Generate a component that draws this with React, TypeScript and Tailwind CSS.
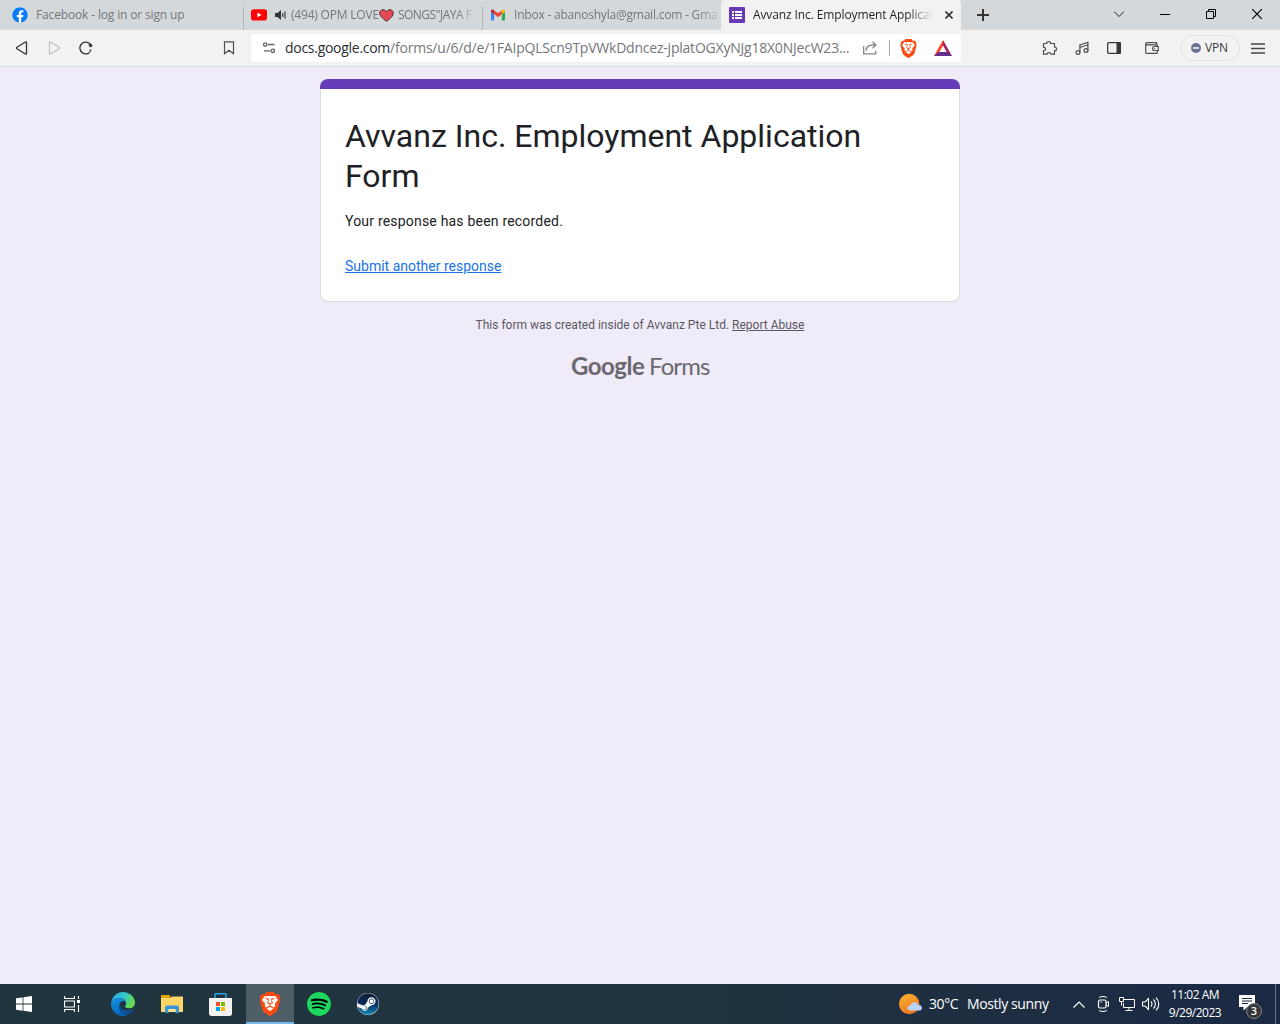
import React from "react";
import { SiBrave, SiSpotify } from "react-icons/si";
import { FaSteam, FaFacebook } from "react-icons/fa";

const ui = "font-['Open_Sans','Noto_Sans',sans-serif]";

function BraveLogo({ size }: { size: string }) {
  return (
    <span className={`grid ${size}`}>
      <svg viewBox="0 0 24 24" className="col-start-1 row-start-1 h-full w-full">
        <path d="M6 4h12l2 4-2 9-6 5-6-5-2-9z" fill="#fff" />
      </svg>
      <SiBrave className="col-start-1 row-start-1 h-full w-full text-[#fb4b10]" />
    </span>
  );
}

function YouTube() {
  return (
    <svg className="h-4 w-4 shrink-0" viewBox="0 0 16 16">
      <rect y="2.2" width="16" height="11.4" rx="2.8" fill="#f00" />
      <path d="M6.4 5.5v4.8L10.6 7.9z" fill="#fff" />
    </svg>
  );
}

function Gmail() {
  return (
    <svg className="h-4 w-4 shrink-0" viewBox="0 0 16 16">
      <path d="M1 4.2v8.3c0 .6.4 1 1 1h2.2V6.6z" fill="#4285f4" />
      <path d="M15 4.2v8.3c0 .6-.4 1-1 1h-2.2V6.6z" fill="#34a853" />
      <path d="M11.8 4.1V7.2L15 4.8V3.9c0-1.4-1.4-1.9-2.2-1.2z" fill="#fbbc04" />
      <path d="M4.2 7.3V3.4L8 6.3l3.8-2.9v3.9L8 10.2z" fill="#ea4335" />
      <path d="M1 3.9v.9l3.2 2.5V3.4l-1-.7C2.400 2.100 1 2.500 1 3.900z" fill="#c5221f" />
    </svg>
  );
}

function FormsIcon() {
  return (
    <svg className="h-4 w-4 shrink-0" viewBox="0 0 16 16">
      <rect width="16" height="16" rx="1" fill="#673ab7" />
      <path d="M3 4h2v2H3zM6 4h7v2H6zM3 7h2v2H3zM6 7h7v2H6zM3 10h2v2H3zM6 10h7v2H6z" fill="#fff" />
    </svg>
  );
}

function TabStrip() {
  return (
    <div className={`flex h-[30px] bg-[#d4d8db] text-[12px] leading-[30px] text-[#73777a] ${ui}`}>
      <div className="flex w-[244px] items-center pl-3">
        <span className="flex h-4 w-4 shrink-0 items-center justify-center rounded-full bg-white">
          <FaFacebook className="h-4 w-4 text-[#0a7cf5]" />
        </span>
        <span className="ml-2 flex-1 whitespace-nowrap tracking-[-0.15px]">Facebook - log in or sign up</span>
        <span className="mt-[7px] h-[23px] w-px bg-[#b3b7ba]" />
      </div>
      <div className="flex w-[239px] items-center pl-[7px]">
        <YouTube />
        <svg className="ml-2 h-3 w-3 shrink-0" viewBox="0 0 12 12">
          <path d="M0 4h2.500L6 1v10L2.500 8H0z" fill="#333" />
          <path d="M7.800 4v4M10 2.500v7" stroke="#333" strokeWidth="1.100" fill="none" />
        </svg>
        <span className="ml-1 flex flex-1 items-center whitespace-nowrap [mask-image:linear-gradient(to_right,#000_165px,transparent_186px)]">
          <span className="tracking-[-0.2px]">(494) OPM LOVE</span>
          <svg className="h-[13px] w-[15px] shrink-0" viewBox="0 0 15 13">
            <path d="M7.500 12.300C3 9 .7 6.700.7 4.100.7 2 2.200.700 4 .700c1.500 0 2.700.800 3.500 2C8.300 1.500 9.500.700 11 .700c1.800 0 3.300 1.300 3.300 3.400 0 2.600-2.300 4.900-6.800 8.200z" fill="#e74856" stroke="#4b3034" strokeWidth="1" />
          </svg>
          <span className="ml-1 tracking-[-0.5px]">SONGS"JAYA F</span>
        </span>
        <span className="ml-1 mt-[7px] h-[23px] w-px bg-[#b3b7ba]" />
      </div>
      <div className="flex w-[238px] items-center pl-[7px]">
        <Gmail />
        <span className="ml-2 w-[206px] whitespace-nowrap tracking-[-0.21px] [mask-image:linear-gradient(to_right,#000_182px,transparent_212px)]">Inbox - abanoshyla@gmail.com - Gma</span>
      </div>
      <div className="flex w-60 items-center rounded-t-[4px] bg-[#f2f2f2] pl-2 text-[#1f2225]">
        <FormsIcon />
        <span className="ml-2 w-[181px] whitespace-nowrap tracking-[-0.11px] [mask-image:linear-gradient(to_right,#000_155px,transparent_180px)]">Avvanz Inc. Employment Applicat</span>
        <svg className="ml-[11px] h-2 w-2" viewBox="0 0 8 8">
          <path d="M.5.500l7 7M7.500.500l-7 7" stroke="#333" strokeWidth="1.600" />
        </svg>
      </div>
      <svg className="ml-4 mt-[9px] h-3 w-3" viewBox="0 0 12 12">
        <path d="M6 0v12M0 6h12" stroke="#333" strokeWidth="2" />
      </svg>
      <div className="ml-auto flex items-center pb-[2px]">
        <svg className="mr-9 h-[6px] w-[10px]" viewBox="0 0 10 6">
          <path d="M0 .5l5 5 5-5" stroke="#222" fill="none" />
        </svg>
        <svg className="mr-9 h-[10px] w-[10px]" viewBox="0 0 10 10">
          <path d="M0 5.500h10" stroke="#000" />
        </svg>
        <svg className="mr-9 h-[10px] w-[10px]" viewBox="0 0 10 10">
          <path d="M.5 2.500h7v7h-7zM2.500 2.500v-2h7v7h-2" stroke="#000" fill="none" />
        </svg>
        <svg className="mr-[18px] h-[10px] w-[10px]" viewBox="0 0 10 10">
          <path d="M0 0l10 10M10 0L0 10" stroke="#000" strokeWidth="1.200" />
        </svg>
      </div>
    </div>
  );
}

function Toolbar() {
  const line = { fill: "none", stroke: "#4b4e52", strokeWidth: 1.2 } as const;
  return (
    <div className={`flex h-[37px] items-center border-b border-[#d7dadd] bg-[#f2f2f2] ${ui}`}>
      <svg className="ml-4 h-4 w-3" viewBox="0 0 12 16">
        <path d="M10.500 2.500v11c0 .7-.6.900-1.100.500L1 8.800c-.6-.5-.6-1 0-1.500L9.400 2c.5-.4 1.100-.2 1.100.5z" fill="none" stroke="#333" strokeWidth="1.300" />
      </svg>
      <svg className="ml-5 h-4 w-3" viewBox="0 0 12 16">
        <path d="M1.500 2.500v11c0 .7.6.900 1.100.500L11 8.800c.6-.5.6-1 0-1.500L2.600 2c-.5-.4-1.100-.2-1.100.5z" fill="none" stroke="#bfc1c4" strokeWidth="1.300" />
      </svg>
      <svg className="ml-[18px] h-4 w-4" viewBox="0 0 16 16">
        <path d="M11.600 12.500A5.900 5.900 0 1 1 13 5.300" fill="none" stroke="#333" strokeWidth="1.400" />
        <path d="M10.300 5.500l2-2.300 2.400 2.300-1.800 2z" fill="#333" />
        <path d="M12.800 9.500c-.2.800-.5 1.500-1 2.300" stroke="#333" strokeWidth="1.300" />
      </svg>
      <svg className="ml-[129px] h-[14px] w-3" viewBox="0 0 12 14">
        <path d="M1.500.800h9v12L6 9.300 1.500 12.800z" {...line} strokeLinejoin="round" />
      </svg>
      <div className="ml-4 flex h-7 w-[710px] items-center rounded bg-white pl-3">
        <svg className="h-3 w-3" viewBox="0 0 12 12">
          <g fill="none" stroke="#5f6368" strokeWidth="1.300">
            <circle cx="2.200" cy="2.500" r="1.700" />
            <circle cx="9.800" cy="8.800" r="1.700" />
            <path d="M5 2.500h6.500M1 8.800h6" />
          </g>
        </svg>
        <span className="ml-[10px] w-[567px] whitespace-nowrap text-[14px] leading-7 tracking-[-0.22px] text-[#74777b]">
          <span className="tracking-[-0.28px] text-[#2b2e31]">docs.google.com</span>/forms/u/6/d/e/1FAIpQLScn9TpVWkDdncez-jplatOGXyNJg18X0NJecW23...
        </span>
        <svg className="ml-[11px] h-[14px] w-[14px]" viewBox="0 0 14 14">
          <path d="M.7 5v7.800h12V9.800M3 9.800c.3-4.300 3-5.800 7-5.800h2.500M9.500.8l3.500 3.200-3.500 3.200" fill="none" stroke="#85888b" strokeWidth="1.300" />
        </svg>
        <span className="ml-3 h-4 w-px bg-[#a5a8ab]" />
        <span className="ml-[9px]"><BraveLogo size="h-[19px] w-[19px]" /></span>
        <svg className="ml-4 h-4 w-[18px]" viewBox="0 0 18 16">
          <path d="M9 0L0 16l4.500-2.500L9 5.500z" fill="#ff4724" />
          <path d="M9 0l9 16-4.500-2.500L9 5.500z" fill="#9e1f63" />
          <path d="M0 16l4.500-4h9l4.500 4z" fill="#662d91" />
        </svg>
      </div>
      <svg className="ml-[81px] h-4 w-4" viewBox="0 0 16 16">
        <path d="M1.500 3.500h3.300C4.300.8 9 .8 8.500 3.500h4v3.600c2.800-.4 2.800 4 0 3.600v3.500H8.800c.2-2.200-3.800-2.200-3.600 0H1.500v-3.500c2.700.2 2.700-3.800 0-3.600z" {...line} strokeLinejoin="round" />
      </svg>
      <svg className="ml-[17px] h-4 w-4" viewBox="0 0 16 16">
        <circle cx="3" cy="12.500" r="1.900" {...line} />
        <circle cx="11" cy="10.500" r="1.900" {...line} />
        <path d="M4.900 12.500V5l8-2.700v8.200M4.900 7.500l8-2.700" {...line} />
      </svg>
      <svg className="ml-4 h-3 w-[14px]" viewBox="0 0 14 12">
        <rect x=".7" y=".7" width="12.600" height="10.600" rx="1" fill="none" stroke="#35383b" strokeWidth="1.300" />
        <path d="M9.500 0H13a1 1 0 0 1 1 1v10a1 1 0 0 1-1 1H9.500z" fill="#35383b" />
      </svg>
      <svg className="ml-6 h-3 w-[14px]" viewBox="0 0 14 12">
        <path d="M12.300 4V2.800H2C.3 2.800.3.700 2 .700h9.500v2M.7 1.700v8.500c0 .7.4 1.100 1.100 1.100h9.500c.6 0 1-.4 1-1V8.500M13.300 4.500H9.500c-2.500 0-2.500 4 0 4h3.800zM9.300 6.500h1" {...line} />
      </svg>
      <div className="ml-[21px] flex h-[26px] w-[60px] items-center rounded-full border border-[#dfe1e3] pl-[10px] text-[12px] text-[#3b3d40]">
        <span className="flex h-[10px] w-[10px] items-center justify-center rounded-full bg-[#6b7094]">
          <span className="h-[1.5px] w-[6px] bg-[#d7d9e5]" />
        </span>
        <span className="ml-1 tracking-[-0.2px]">VPN</span>
      </div>
      <svg className="ml-[11px] h-[11px] w-[14px]" viewBox="0 0 14 11">
        <path d="M0 1h14M0 5.500h14M0 10h14" stroke="#44474a" strokeWidth="1.300" />
      </svg>
    </div>
  );
}

function FormPage() {
  return (
    <main className="flex flex-1 flex-col items-center bg-[#efebf8] pt-3 font-['Roboto',sans-serif]">
      <section className="flex h-[223px] w-[640px] flex-col">
        <div className="h-[10px] shrink-0 rounded-t-lg bg-[#673ab7]" />
        <div className="flex-1 rounded-b-lg border border-t-0 border-[#dadce0] bg-white px-6">
          <h1 className="mt-[27px] text-[32px] leading-10 text-[#202124]">Avvanz Inc. Employment Application Form</h1>
          <p className="mt-[15px] text-[14px] leading-5 tracking-[0.2px] text-[#202124]">Your response has been recorded.</p>
          <a className="mt-[25px] block text-[14px] leading-5 text-[#1a73e8] underline">Submit another response</a>
        </div>
      </section>
      <p className="mt-[15px] text-[12px] leading-4 text-[#5b5861]">
        This form was created inside of Avvanz Pte Ltd. <a className="underline">Report Abuse</a>
      </p>
      <div className="mt-[19px] flex items-baseline gap-1 font-['Lato',sans-serif] text-[24px] leading-7 text-[#6b6870]">
        <span className="w-[74px] font-bold tracking-[-0.5px]">Google</span>
        <span className="w-[60px] tracking-[-0.9px]">Forms</span>
      </div>
    </main>
  );
}

function Taskbar() {
  return (
    <footer className={`flex h-10 items-center bg-gradient-to-r from-[#20353e] via-[#20343f] to-[#1b2944] text-white ${ui}`}>
      <div className="flex w-12 justify-center">
        <svg className="h-4 w-4" viewBox="0 0 16 16">
          <path d="M0 2.300L6.600 1.400v6.200H0zM7.400 1.200L16 0v7.600H7.400zM0 8.400h6.600v6.300L0 13.800zM7.400 8.400H16V16l-8.600-1.200z" fill="#fff" />
        </svg>
      </div>
      <div className="mr-[2px] flex w-12 justify-center">
        <svg className="h-4 w-4" viewBox="0 0 16 16">
          <path d="M.6 0v2.500h9.800V0M.6 16v-2.500h9.800V16M.6 5h9.800v6H.6zM14.500 0v3M14.500 9v7" fill="none" stroke="#fff" strokeWidth="1.100" />
          <rect x="13" y="4" width="3" height="3" fill="#fff" />
        </svg>
      </div>
      <div className="flex w-[49px] justify-center">
        <svg className="h-6 w-6" viewBox="0 0 24 24">
          <defs>
            <linearGradient id="edgeTop" x1="0" y1="0" x2="1" y2=".4">
              <stop offset="0" stopColor="#2aa7e5" />
              <stop offset=".55" stopColor="#2fc5c9" />
              <stop offset="1" stopColor="#68dd50" />
            </linearGradient>
            <linearGradient id="edgeLow" x1="0" y1="0" x2=".4" y2="1">
              <stop offset="0" stopColor="#1698e4" />
              <stop offset="1" stopColor="#0862b8" />
            </linearGradient>
          </defs>
          <path d="M.5 10C1.500 3.800 6.300 0 12 0c7 0 12 5.300 12 10.500 0 3.500-2.700 5.800-6 5.800-2.500 0-4-.8-4-1.700 0-.8 1.100-1.200 1.100-3C15.100 8.300 12 6 8.500 6 4.500 6 1.700 8 .5 10z" fill="url(#edgeTop)" />
          <path d="M0 12C0 8 4 6 8.500 6c3 0 5.500 1.600 6.300 3.800C13.800 9 12.800 8.800 12 9c-3.500.8-4.800 4.300-3.300 8 1.500 3.800 4.800 5.600 8.500 5.800C15.800 23.500 14 24 12 24 5.300 24 0 18.600 0 12z" fill="url(#edgeLow)" />
          <path d="M8.700 10.800C6.600 15 9 22 16 23c2.600-.9 5-2.900 6.300-5.300.3-.5-.2-.8-.7-.5-6.300 2.900-13.500-.2-12.900-6.400z" fill="#124e93" />
        </svg>
      </div>
      <div className="flex w-[49px] justify-center">
        <svg className="h-[18px] w-[22px]" viewBox="0 0 22 18">
          <path d="M0 0h9v3H0z" fill="#e9a100" />
          <path d="M0 3h9l1.500-1.500H22V17H0z" fill="#ffd566" />
          <path d="M4 18v-5.500C4 11 4.800 10.500 6 10.500h10c1.200 0 2 .5 2 2V18h-3.500v-4h-7v4z" fill="#3a95d8" />
          <path d="M7.500 14h7v3h-7z" fill="#ffe599" />
        </svg>
      </div>
      <div className="mr-px flex w-[49px] justify-center">
        <svg className="h-[23px] w-[23px]" viewBox="0 0 23 23">
          <path d="M6 6V1.500c0-.5.3-.8.800-.8h9.400c.5 0 .8.300.8.800V6" fill="none" stroke="#29a4e5" strokeWidth="1.500" />
          <path d="M0 5h23v15.500c0 1.600-.9 2.500-2.500 2.500h-18C.9 23 0 22.100 0 20.500z" fill="#f2f2f3" />
          <path d="M7 9h4v4H7z" fill="#f25022" /><path d="M12 9h4v4h-4z" fill="#7fba00" />
          <path d="M7 14h4v4H7z" fill="#00a4ef" /><path d="M12 14h4v4h-4z" fill="#ffb900" />
        </svg>
      </div>
      <div className="flex h-10 w-12 items-center justify-center border-b-2 border-[#76b9ed] bg-[#4d5e67] pt-[2px]">
        <BraveLogo size="h-6 w-6" />
      </div>
      <div className="flex w-[49px] justify-center">
        <span className="rounded-full bg-black"><SiSpotify className="h-6 w-6 text-[#1ed760]" /></span>
      </div>
      <div className="flex w-[49px] justify-center">
        <span className="rounded-full bg-white">
          <svg className="h-0 w-0">
            <defs>
              <linearGradient id="steam" x1="0" y1="0" x2="0" y2="1">
                <stop offset="0" stopColor="#111d38" />
                <stop offset=".5" stopColor="#0b2b5b" />
                <stop offset="1" stopColor="#1387b8" />
              </linearGradient>
            </defs>
          </svg>
          <FaSteam className="h-[22px] w-[22px]" fill="url(#steam)" />
        </span>
      </div>
      <div className="ml-auto flex h-10 items-center">
        <svg className="mt-[2px] h-6 w-6" viewBox="0 0 24 24">
          <defs>
            <linearGradient id="sun" x1="0" y1="0" x2=".5" y2="1">
              <stop offset="0" stopColor="#f8b62d" />
              <stop offset="1" stopColor="#f07620" />
            </linearGradient>
          </defs>
          <circle cx="10.200" cy="11" r="10.200" fill="url(#sun)" />
          <path d="M11.500 17.500c-4.500 0-4-5 0-5 .8-4 6.500-4.500 7.800-.5 4.500-.5 5 5.500.8 5.500z" fill="#b8d3f7" />
        </svg>
        <span className="mb-px ml-[6px] w-[38px] whitespace-nowrap text-[14px] tracking-[-0.4px]">30°C</span>
        <span className="mb-px w-[106px] whitespace-nowrap text-[14px] tracking-[-0.4px]">Mostly sunny</span>
        <svg className="h-[7px] w-3" viewBox="0 0 12 7"><path d="M.5 6.500L6 1l5.500 5.500" fill="none" stroke="#fff" strokeWidth="1.200" /></svg>
        <svg className="ml-3 h-4 w-3" viewBox="0 0 12 16">
          <path d="M2 1.500C4 .2 8 .2 10 1.500M2 14.500c2 1.300 6 1.300 8 0" fill="none" stroke="#fff" />
          <rect x="1.500" y="4" width="7.500" height="8" rx="1.500" fill="none" stroke="#fff" strokeWidth="1.200" />
          <path d="M9 7l2.500-1.500v5L9 9" fill="none" stroke="#fff" />
          <path d="M3.500 6H5" stroke="#fff" />
        </svg>
        <svg className="ml-[10px] h-[14px] w-4" viewBox="0 0 16 14">
          <path d="M5 2.500h10.500v8H4.500V6M10 10.500v3M6.500 13.500h7M.5.500h4v4h-4zM2.500 4.500v4" fill="none" stroke="#fff" />
        </svg>
        <svg className="ml-[7px] h-[14px] w-[18px]" viewBox="0 0 18 14">
          <path d="M.5 5h2.500l3.500-3.500v11L3 9H.5zM9 4.500c1.300 1.300 1.300 3.700 0 5M11.500 2.500c2.500 2.500 2.500 6.500 0 9M14 .700c3.700 3.600 3.700 9 0 12.600" fill="none" stroke="#fff" strokeWidth="1.100" />
        </svg>
        <div className="ml-1 w-[62px] whitespace-nowrap text-center text-[12px] leading-[18px] tracking-[-0.5px]">
          <div>11:02 AM</div>
          <div>9/29/2023</div>
        </div>
        <div className="relative ml-[13px] h-6 w-6">
          <svg className="mt-[3px] h-4 w-4" viewBox="0 0 16 16">
            <path d="M0 0h16v12H8l-3.500 3.500V12H0z" fill="#fff" />
            <path d="M3 3.500h10M3 6h10M3 8.500h6" stroke="#1b2b42" />
          </svg>
          <span className="absolute left-[7px] top-[11px] flex h-4 w-4 items-center justify-center rounded-full border border-[#85888b] bg-[#333537] text-[11px] font-semibold">3</span>
        </div>
        <span className="ml-3 mr-1 h-10 w-px bg-[#657080]" />
      </div>
    </footer>
  );
}

export default function App() {
  return (
    <div className="flex h-screen w-full flex-col overflow-hidden">
      <TabStrip />
      <Toolbar />
      <FormPage />
      <Taskbar />
    </div>
  );
}
